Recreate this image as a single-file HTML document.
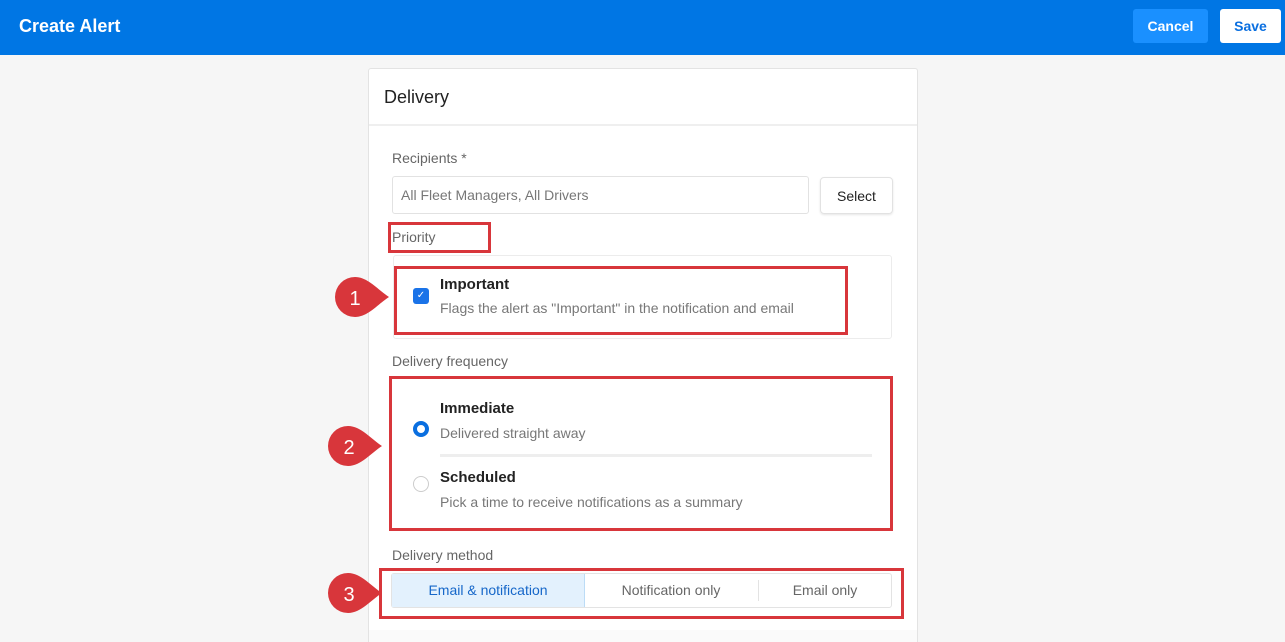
<!DOCTYPE html>
<html style="overflow:hidden;height:642px"><head><style>
*{box-sizing:border-box;margin:0;padding:0}
body{width:1285px;height:642px;overflow:hidden;background:#f6f6f6;font-family:"Liberation Sans",sans-serif;position:relative}
.a{position:absolute}
.top{left:0;top:0;width:1285px;height:55px;background:#0076e4}
.red{border:3px solid #d8363b;position:absolute}
.lbl{font-size:14px;color:#666}
.bold{font-size:15px;font-weight:bold;color:#222}
.sub{font-size:14px;color:#777}
</style></head><body>
<div class="a top"></div>
<div class="a" style="left:19px;top:16px;color:#fff;font-weight:bold;font-size:18px">Create Alert</div>
<div class="a" style="left:1133px;top:9px;width:75px;height:34px;background:#1a90ff;border-radius:3px;color:#fff;font-weight:bold;font-size:14px;text-align:center;line-height:34px">Cancel</div>
<div class="a" style="left:1220px;top:9px;width:61px;height:34px;background:#fff;border-radius:3px;color:#0a6fe0;font-weight:bold;font-size:14px;text-align:center;line-height:34px">Save</div>

<div class="a" style="left:368px;top:68px;width:550px;height:574px;background:#fff;border:1px solid #e3e3e3;border-bottom:none;border-radius:3px 3px 0 0"></div>
<div class="a" style="left:369px;top:124px;width:548px;height:2px;background:#efefef"></div>
<div class="a" style="left:369px;top:630px;width:548px;height:12px;background:#fafafa"></div>
<div class="a" style="left:384px;top:87px;font-size:18px;color:#222">Delivery</div>

<div class="a lbl" style="left:392px;top:150px">Recipients *</div>
<div class="a" style="left:392px;top:176px;width:417px;height:38px;border:1px solid #e2e2e2;border-radius:3px"></div>
<div class="a sub" style="left:401px;top:187px;color:#777">All Fleet Managers, All Drivers</div>
<div class="a" style="left:820px;top:177px;width:73px;height:37px;border:1px solid #e2e2e2;border-radius:4px;box-shadow:0 1px 2px rgba(0,0,0,.1);font-size:14px;color:#222;text-align:center;line-height:36px">Select</div>

<div class="red" style="left:388px;top:222px;width:103px;height:31px"></div>
<div class="a lbl" style="left:392px;top:229px">Priority</div>
<div class="a" style="left:393px;top:255px;width:499px;height:84px;border:1px solid #ececec;border-radius:3px"></div>
<div class="red" style="left:394px;top:266px;width:454px;height:69px"></div>
<div class="a" style="left:413px;top:288px;width:16px;height:16px;background:#1a73e8;border-radius:3px;color:#fff;font-size:10px;text-align:center;line-height:16px">✓</div>
<div class="a bold" style="left:440px;top:276px">Important</div>
<div class="a sub" style="left:440px;top:300px">Flags the alert as "Important" in the notification and email</div>

<div class="a lbl" style="left:392px;top:353px">Delivery frequency</div>
<div class="red" style="left:389px;top:376px;width:504px;height:155px"></div>
<div class="a" style="left:413px;top:421px;width:16px;height:16px;border:4px solid #0a6fe0;border-radius:50%"></div>
<div class="a bold" style="left:440px;top:400px">Immediate</div>
<div class="a sub" style="left:440px;top:425px">Delivered straight away</div>
<div class="a" style="left:440px;top:454px;width:432px;height:3px;background:#eee"></div>
<div class="a" style="left:413px;top:476px;width:16px;height:16px;border:1px solid #ccc;border-radius:50%"></div>
<div class="a bold" style="left:440px;top:469px">Scheduled</div>
<div class="a sub" style="left:440px;top:494px">Pick a time to receive notifications as a summary</div>

<div class="a lbl" style="left:392px;top:547px">Delivery method</div>
<div class="red" style="left:379px;top:568px;width:525px;height:51px"></div>
<div class="a" style="left:391px;top:573px;width:501px;height:35px;border:1px solid #e3e3e3;border-radius:3px"></div>
<div class="a" style="left:392px;top:574px;width:193px;height:33px;background:#e3f1fd;border-right:1px solid #bcdcf6;color:#1667c9;font-size:14px;text-align:center;line-height:33px">Email &amp; notification</div>
<div class="a" style="left:585px;top:574px;width:172px;height:33px;color:#666;font-size:14px;text-align:center;line-height:33px">Notification only</div>
<div class="a" style="left:758px;top:580px;width:1px;height:21px;background:#e3e3e3"></div>
<div class="a" style="left:759px;top:574px;width:132px;height:33px;color:#666;font-size:14px;text-align:center;line-height:33px">Email only</div>

<svg class="a" style="left:0;top:0" width="1285" height="642">
<g fill="#d8363b">
<path d="M355 277 C368 277 378 290 389 297 C378 304 368 317 355 317 A20 20 0 0 1 355 277Z"/>
<path d="M348 426 C361 426 371 439 382 446 C371 453 361 466 348 466 A20 20 0 0 1 348 426Z"/>
<path d="M348 573 C361 573 371 586 382 593 C371 600 361 613 348 613 A20 20 0 0 1 348 573Z"/>
</g>
<g fill="#fff" font-family="Liberation Sans" font-size="20" text-anchor="middle">
<text x="355" y="305">1</text><text x="349" y="454">2</text><text x="349" y="601">3</text>
</g>
</svg>
</body></html>
